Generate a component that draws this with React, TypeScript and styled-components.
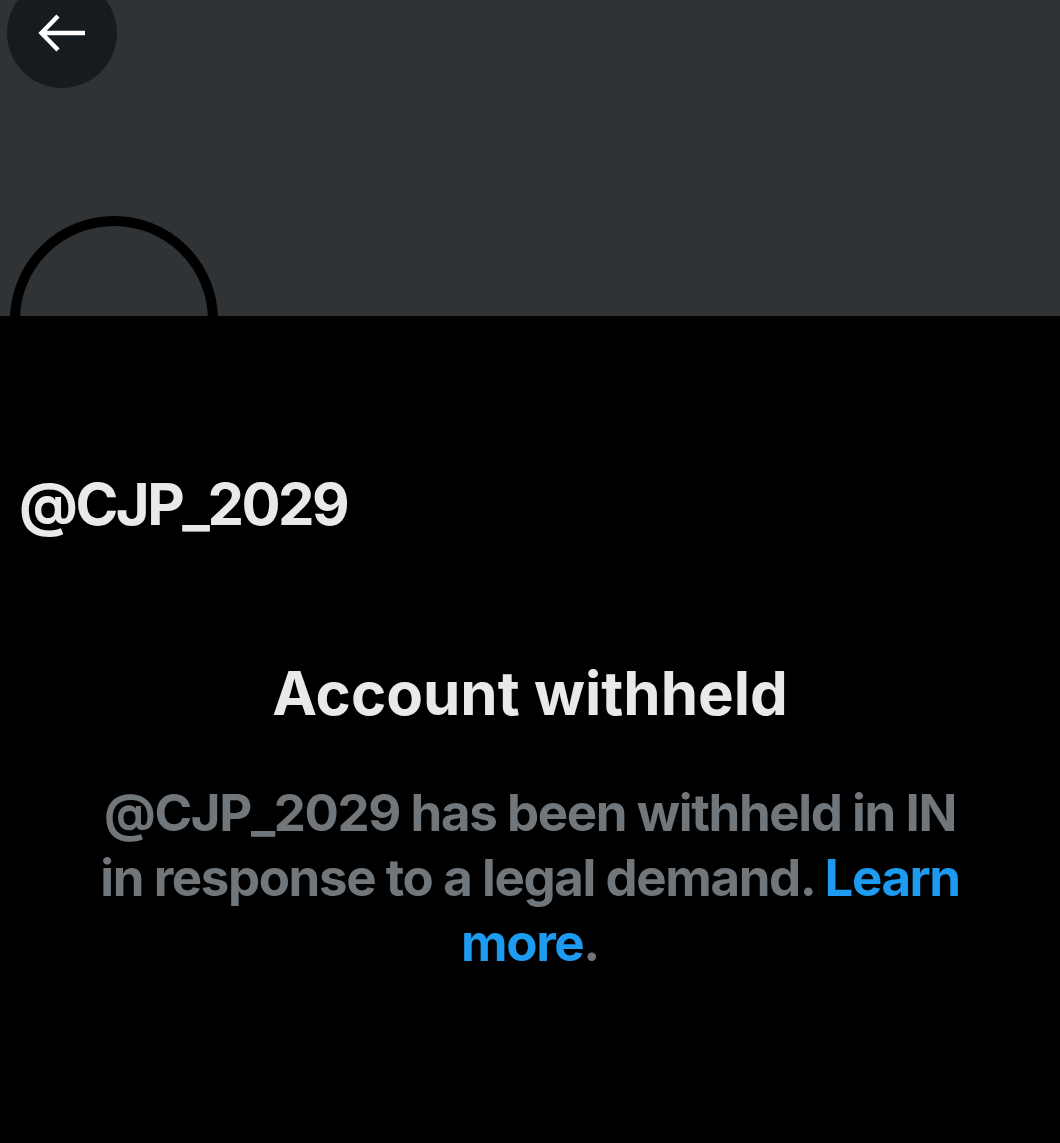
import styled, { createGlobalStyle } from "styled-components";

const GlobalStyle = createGlobalStyle`
    html, body {
        margin: 0;
        padding: 0;
        background: #000000;
    }
    body {
        font-family: Inter, "Noto Sans", "Liberation Sans", sans-serif;
        -webkit-font-smoothing: antialiased;
    }
`;

const App = () => {
    return (
        <Page>
            <GlobalStyle />
            <Banner>
                <BackButton aria-label="Back">
                    <svg width="50" height="42" viewBox="0 0 50 42" fill="none">
                        <path
                            d="M48 21H5M21 4L4.5 21 21 38"
                            stroke="#ffffff"
                            strokeWidth="4.5"
                        />
                    </svg>
                </BackButton>
                <Avatar />
            </Banner>
            <Profile>
                <Handle>@CJP_2029</Handle>
                <Withheld>
                    <Title>Account withheld</Title>
                    <Message>
                        @CJP_2029 has been withheld in IN in response to a legal demand.{" "}
                        <LearnMore href="#">Learn more</LearnMore>.
                    </Message>
                </Withheld>
            </Profile>
        </Page>
    );
};

export default App;

const Page = styled.div`
    width: 1060px;
    height: 1143px;
    background: #000000;
    overflow: hidden;
`;

/* banner */
const Banner = styled.div`
    position: relative;
    height: 316px;
    background-color: #2f3336;
`;
const BackButton = styled.button`
    position: absolute;
    left: 7px;
    top: -22px;
    width: 110px;
    height: 110px;
    border: none;
    border-radius: 50%;
    background-color: rgba(15, 20, 25, 0.75);
    display: flex;
    align-items: center;
    justify-content: center;
    padding: 0;
    cursor: pointer;
`;
const Avatar = styled.div`
    position: absolute;
    left: 10px;
    top: 216px;
    width: 208px;
    height: 208px;
    box-sizing: border-box;
    border: 10px solid #000000;
    border-radius: 50%;
`;

/* profile */
const Profile = styled.div`
    display: flex;
    flex-direction: column;
    padding-top: 152px;
`;
const Handle = styled.div`
    padding-left: 19px;
    font-size: 58px;
    font-weight: 700;
    letter-spacing: -2.5px;
    line-height: 72px;
    color: #e7e9ea;
`;
const Withheld = styled.div`
    display: flex;
    flex-direction: column;
    align-items: center;
    padding: 118px 0 0;
    text-align: center;
`;
const Title = styled.div`
    font-size: 60px;
    font-weight: 700;
    letter-spacing: 0;
    line-height: 70px;
    color: #e7e9ea;
`;
const Message = styled.div`
    margin-top: 52px;
    max-width: 884px;
    font-size: 51px;
    font-weight: 700;
    letter-spacing: -1.4px;
    line-height: 65px;
    color: #71767b;
`;
const LearnMore = styled.a`
    color: #1d9bf0;
    text-decoration: none;
`;
